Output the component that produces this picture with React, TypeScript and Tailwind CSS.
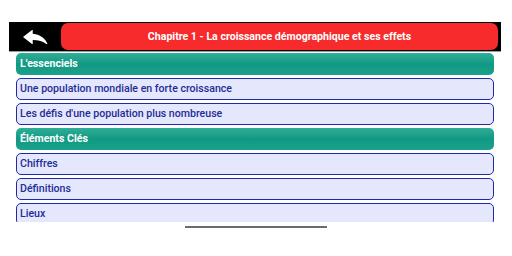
import React from "react";

const items: { label: string; header?: boolean }[] = [
  { label: "L'essenciels", header: true },
  { label: "Une population mondiale en forte croissance" },
  { label: "Les défis d'une population plus nombreuse" },
  { label: "Éléments Clés", header: true },
  { label: "Chiffres" },
  { label: "Définitions" },
  { label: "Lieux" },
];

export default function App() {
  return (
    <div
      className="w-[512px] h-[256px] bg-white relative overflow-hidden"
      style={{ fontFamily: "Roboto, 'Noto Sans', sans-serif" }}
    >
      <div className="h-[22px]" />
      <div className="ml-[9px] w-[492px] h-[30px] bg-black flex items-center border-b border-[#9a9a9a]">
        <div className="w-[52px] flex items-center justify-center">
          <svg width="25" height="14" viewBox="3 5.5 18 13" preserveAspectRatio="none">
            <path d="M10 9V5l-7 7 7 7v-4.1c5 0 8.5 1.6 11 5.1-1-5-4-10-11-11z" fill="#ffffff" />
          </svg>
        </div>
        <div className="flex-1 mr-[3px] h-[27px] bg-[#f72b2b] rounded-[7px] flex items-center justify-center text-white font-bold text-[10.6px]">
          Chapitre 1 - La croissance démographique et ses effets
        </div>
      </div>
      <div className="mt-[1px] ml-[16px] w-[478px] h-[169px] overflow-hidden flex flex-col gap-[3px]">
        {items.map((it) =>
          it.header ? (
            <div
              key={it.label}
              className="shrink-0 h-[22px] rounded-[5px] bg-gradient-to-b from-[#2fae98] via-[#0f9984] to-[#1ca18b] flex items-center pl-[4px] text-white font-bold text-[10.6px]"
            >
              {it.label}
            </div>
          ) : (
            <div
              key={it.label}
              className="shrink-0 h-[22px] rounded-[5px] bg-[#e5e7fc] border-[1.5px] border-[#1e2aa8] flex items-center pl-[3px] text-[#232c96] font-medium text-[10.6px]"
            >
              {it.label}
            </div>
          )
        )}
      </div>
      <div className="mt-[4px] mx-auto w-[142px] h-[2px] bg-[#6b6b6b]" />
    </div>
  );
}
